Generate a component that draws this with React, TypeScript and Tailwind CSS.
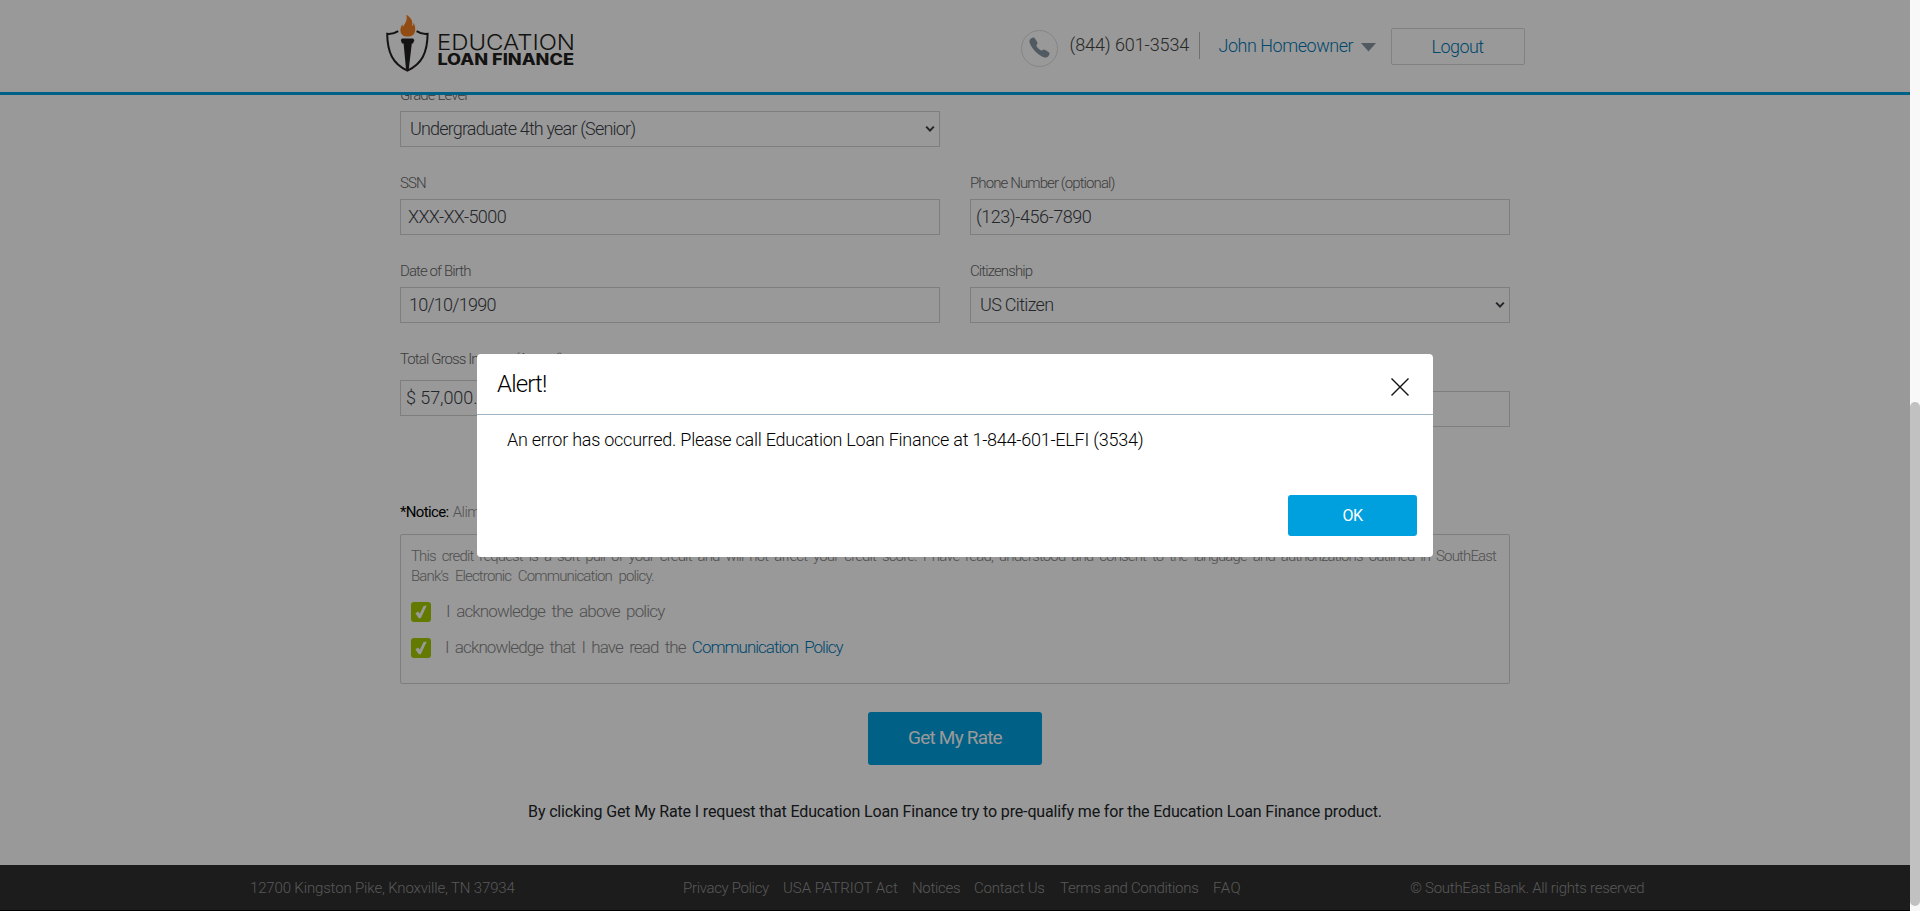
import type { ReactNode } from 'react';
import { IoCall } from 'react-icons/io5';

const inputBox = 'h-9 border border-[#d3d3d3] flex items-center text-[18px] text-[#3c4248]';

function Logo() {
  return (
    <svg width="188" height="60" viewBox="0 0 188 60" className="shrink-0">
      <path
        d="M12.2 17.2C9 19.3 5.5 20.2 1.2 19.8C1.4 38.5 6.8 50 21.4 56.6C36 50 41.4 38.5 41.6 19.8C37.4 20.2 33.8 19.3 30.6 17.2"
        fill="none"
        stroke="#231f20"
        strokeWidth="2"
      />
      <path
        d="M20.2 0.8C25.2 3.4 27.2 7.2 26 12C27.2 11.4 27.6 10.2 27.4 8.8C29.6 12 30 17.5 27.8 20.2C26.4 21.8 24.4 22.6 21.6 22.6C17.4 22.6 14.4 20.4 14.4 16.2C14.4 13.6 15.4 12.2 16.2 10.4C16.8 11.4 16.8 12 17.2 12.8C18.8 9.4 22 6.2 20.2 0.8Z"
        fill="#f07f21"
      />
      <path d="M16 24.6H27L28.4 26L27 29.4H25.8L22.8 55L21.4 56L20 55L17.6 29.4H16L14.8 26Z" fill="#231f20" />
      <text
        x="51"
        y="35.6"
        textLength="138"
        lengthAdjust="spacingAndGlyphs"
        className="text-[22px] font-light"
        fontFamily="Inter, sans-serif"
        fill="#231f20"
      >
        EDUCATION
      </text>
      <text
        x="51.4"
        y="51.2"
        textLength="136.6"
        lengthAdjust="spacingAndGlyphs"
        className="text-[15.5px] font-extrabold"
        fontFamily="Inter, sans-serif"
        fill="#231f20"
      >
        LOAN FINANCE
      </text>
    </svg>
  );
}

function Label({ children }: { children: ReactNode }) {
  return (
    <label className="block h-5 whitespace-nowrap text-[15px] leading-5 tracking-[-0.06em] text-[#666]">
      {children}
    </label>
  );
}

function SelectArrow() {
  return (
    <svg width="10" height="8" viewBox="0 0 10 8" className="ml-auto mr-1 shrink-0">
      <path d="M1.2 1.6L5 5.6L8.8 1.6" fill="none" stroke="#3a3f45" strokeWidth="2" />
    </svg>
  );
}

function Checkbox() {
  return (
    <span className="flex h-5 w-5 shrink-0 items-center justify-center rounded-[3px] bg-[#a3cc00]">
      <svg width="12" height="14" viewBox="0 0 12 14">
        <path d="M0.4 8.2L3.2 6.6L4.8 8.8L8.6 1L11.8 0.4L5.8 13.2H3.8Z" fill="#fff" />
      </svg>
    </span>
  );
}

function Header() {
  return (
    <header className="relative z-10 h-[95px] border-b-[3px] border-[#00a0df] bg-white">
      <div className="mx-auto flex w-[1139px]">
        <div className="pt-[14px]">
          <Logo />
        </div>
        <div className="ml-auto flex items-start">
          <div className="mt-[30px] flex h-[37px] w-[37px] items-start justify-center rounded-full border border-[#dedede] pt-[5px]">
            <IoCall size={23} color="#8797a1" />
          </div>
          <span className="ml-[12px] mt-[34px] w-[129px] whitespace-nowrap text-[18px] leading-[22px] tracking-[-0.005em] text-[#444]">
            (844) 601-3534
          </span>
          <span className="mt-8 h-[27px] w-px bg-[#bbb]" />
          <span className="ml-[19px] mt-[35px] w-[142px] whitespace-nowrap text-[18px] leading-[22px] tracking-[-0.026em] text-[#0078b4]">
            John Homeowner
          </span>
          <svg width="15" height="9" viewBox="0 0 15 9" className="mt-[43px]">
            <path d="M0 0H15L7.5 8.6Z" fill="#8797a1" />
          </svg>
          <button className="ml-[15px] mt-7 h-[37px] w-[134px] rounded-[2px] border border-[#d8d8d8] pb-px text-[18px] font-light tracking-[-0.03em] text-[#0078b4]">
            Logout
          </button>
        </div>
      </div>
    </header>
  );
}

function Field({ label, children }: { label: ReactNode; children: ReactNode }) {
  return (
    <div className="h-[88px] w-[540px]">
      <Label>{label}</Label>
      {children}
    </div>
  );
}

function ApplicationForm() {
  return (
    <main className="-mt-[10px] flex h-[780px] flex-col">
      <div className="mx-auto w-[1110px]">
        <div className="grid grid-cols-[540px_540px] gap-x-[30px]">
          <Field label="Grade Level">
            <div className={`${inputBox} mt-[6px] pl-[9px] pb-px tracking-[-0.046em]`}>
              Undergraduate 4th year (Senior)
              <SelectArrow />
            </div>
          </Field>
          <div />
          <Field label="SSN">
            <div className={`${inputBox} mt-[6px] pl-[7px] pb-px tracking-[-0.033em]`}>XXX-XX-5000</div>
          </Field>
          <Field label="Phone Number (optional)">
            <div className={`${inputBox} mt-[6px] pl-[5px] pb-px tracking-[-0.026em]`}>(123)-456-7890</div>
          </Field>
          <Field label="Date of Birth">
            <div className={`${inputBox} mt-[6px] pl-2 pb-px tracking-[-0.042em]`}>10/10/1990</div>
          </Field>
          <Field label="Citizenship">
            <div className={`${inputBox} mt-[6px] pl-[9px] pb-px tracking-[-0.038em]`}>
              US Citizen
              <SelectArrow />
            </div>
          </Field>
          <Field label="Total Gross Income (Annual)">
            <div className={`${inputBox} mt-[11px] pl-[5px] pb-px tracking-[-0.004em]`}>$ 57,000.00</div>
          </Field>
          <div className="h-[88px] pt-[42px]">
            <div className={inputBox} />
          </div>
        </div>
        <p className="mt-[65px] whitespace-nowrap text-[15px] leading-5 tracking-[-0.035em] text-[#8a8a8a]">
          <span className="font-normal tracking-[-0.043em] text-black">*Notice:</span>{' '}
          <span className="ml-px">Alimony</span>
        </p>
        <section className="mt-3 h-[150px] rounded-[2px] border border-[#d3d3d3] px-[10px] pt-[11px] text-[#868686]">
          <p className="w-[1085px] text-[15px] leading-5 tracking-[-0.057em]">
            <span className="block [text-align-last:justify]">
              This credit request is a soft pull of your credit and will not affect your credit score. I have read,
              understood and consent to the language and authorizations outlined in SouthEast
            </span>
            <span className="block [word-spacing:3.8px]">Bank's Electronic Communication policy.</span>
          </p>
          <div className="mt-4 flex h-5 items-center gap-[15px]">
            <Checkbox />
            <span className="-mt-[3px] whitespace-nowrap text-[17px] leading-5 tracking-[-0.05em] [word-spacing:3.2px]">
              I acknowledge the above policy
            </span>
          </div>
          <div className="mt-4 flex h-5 items-center gap-[14px]">
            <Checkbox />
            <span className="-mt-[2px] whitespace-nowrap text-[17px] leading-5 tracking-[-0.053em] [word-spacing:3px]">
              I acknowledge that I have read the{' '}
              <a className="tracking-[-0.059em] text-[#0078b4]">Communication Policy</a>
            </span>
          </div>
        </section>
        <div className="mt-7 flex justify-center">
          <button className="h-[53px] w-[174px] rounded-[3px] bg-[#00a0df] text-[19px] font-normal tracking-[-0.042em] text-white">
            Get My Rate
          </button>
        </div>
        <p className="mt-9 text-center text-[16px] font-normal leading-[22px] tracking-[-0.009em] text-[#212529]">
          By clicking Get My Rate I request that Education Loan Finance try to pre-qualify me for the Education Loan
          Finance product.
        </p>
      </div>
    </main>
  );
}

function Footer() {
  return (
    <footer className="flex h-[46px] items-start border-b border-black bg-[#2f2f2f] pl-[250px] pt-[13px] text-[15px] leading-5 whitespace-nowrap text-[#939393]">
      <span className="w-[433px] tracking-[-0.01em]">12700 Kingston Pike, Knoxville, TN 37934</span>
      <nav className="flex w-[727px]">
        <a className="w-[100px] tracking-[-0.022em]">Privacy Policy</a>
        <a className="w-[129px] tracking-[-0.002em]">USA PATRIOT Act</a>
        <a className="w-[62px] tracking-[-0.02em]">Notices</a>
        <a className="w-[86px] tracking-[-0.015em]">Contact Us</a>
        <a className="w-[153px] tracking-[-0.02em]">Terms and Conditions</a>
        <a className="tracking-[0.03em]">FAQ</a>
      </nav>
      <span className="tracking-[-0.018em]">© SouthEast Bank. All rights reserved</span>
    </footer>
  );
}

function AlertDialog() {
  return (
    <div className="absolute inset-0 z-20 flex items-start justify-center bg-black/40 pt-[354px]">
      <div className="h-[203px] w-[956px] rounded-[4px] bg-white text-[#212529]">
        <div className="flex h-[61px] items-start border-b border-[#9fb4c2] pl-5 pr-6">
          <h2 className="pt-[15px] text-[24px] leading-[30px] font-light tracking-[-0.035em] text-black">Alert!</h2>
          <svg width="18" height="18" viewBox="0 0 18 18" className="ml-auto mt-6">
            <path d="M0.5 0.5L17.5 17.5M17.5 0.5L0.5 17.5" stroke="#111" strokeWidth="1.4" />
          </svg>
        </div>
        <p className="ml-[30px] mt-[13px] text-[18px] leading-6 tracking-[-0.0135em] text-black">
          An error has occurred. Please call Education Loan Finance at 1-844-601-ELFI (3534)
        </p>
        <div className="mt-[43px] flex justify-end pr-4">
          <button className="h-[41px] w-[129px] rounded-[3px] bg-[#00a0df] text-[16px] font-normal tracking-[-0.03em] text-white">
            OK
          </button>
        </div>
      </div>
    </div>
  );
}

function Scrollbar() {
  return (
    <div className="h-full w-[10px] bg-[#f8f8f8] pt-[402px]">
      <div className="h-[504px] rounded-full bg-[#c1c1c1]" />
    </div>
  );
}

export default function App() {
  return (
    <div className="flex h-[911px] w-[1920px] overflow-hidden font-['Roboto',sans-serif] font-light">
      <div className="relative h-full w-[1910px] overflow-hidden bg-white">
        <Header />
        <ApplicationForm />
        <Footer />
        <AlertDialog />
      </div>
      <Scrollbar />
    </div>
  );
}
